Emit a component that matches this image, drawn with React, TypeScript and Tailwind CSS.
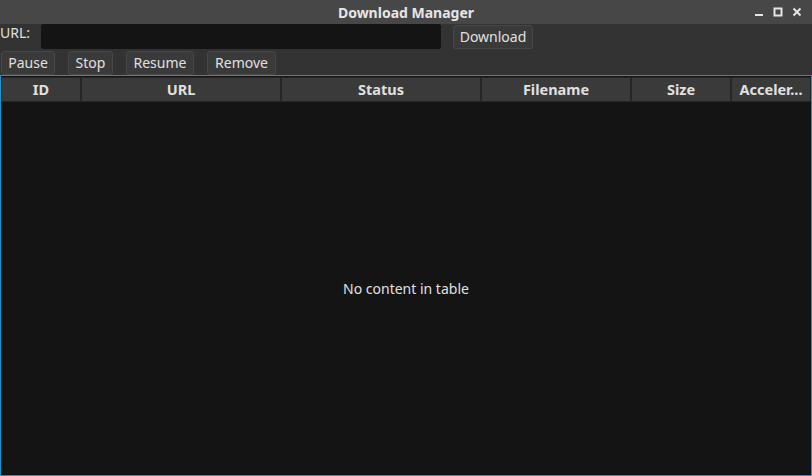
import React from "react";

const columns = [
  { label: "ID", w: "w-[80px]" },
  { label: "URL", w: "w-[200px]" },
  { label: "Status", w: "w-[200px]" },
  { label: "Filename", w: "w-[150px]" },
  { label: "Size", w: "w-[100px]" },
  { label: "Acceler...", w: "flex-1" },
];

function Btn({ children, className = "" }: { children: React.ReactNode; className?: string }) {
  return (
    <button
      className={`h-[24px] rounded-[3px] border border-[#474747] bg-[#3a3a3a] text-[14px] leading-none text-[#e0e0e0] ${className}`}
    >
      {children}
    </button>
  );
}

export default function App() {
  return (
    <div
      className="flex h-[476px] w-[812px] flex-col bg-[#333333] text-[#e0e0e0]"
      style={{ fontFamily: '"Noto Sans", "DejaVu Sans", sans-serif' }}
    >
      {/* Title bar */}
      <div className="relative flex h-[24px] shrink-0 items-center justify-center bg-[#474747]">
        <span className="text-[14px] font-bold text-[#e6e6e6]">Download Manager</span>
        <div className="absolute right-[10px] top-0 flex h-full items-center gap-[9px]">
          <svg width="10" height="10" viewBox="0 0 10 10">
            <rect x="1" y="7" width="8" height="2" fill="#e6e6e6" />
          </svg>
          <svg width="10" height="10" viewBox="0 0 10 10">
            <rect x="1.5" y="1.5" width="7" height="7" fill="none" stroke="#e6e6e6" strokeWidth="2" />
          </svg>
          <svg width="10" height="10" viewBox="0 0 10 10">
            <path d="M1.5 1.5 L8.5 8.5 M8.5 1.5 L1.5 8.5" stroke="#e6e6e6" strokeWidth="2" />
          </svg>
        </div>
      </div>

      {/* URL row */}
      <div className="flex h-[26px] shrink-0 items-start">
        <span className="mt-[1px] w-[41px] text-[14px] leading-[16px]">URL:</span>
        <div className="h-[25px] w-[400px] rounded-[3px] bg-[#141414]" />
        <Btn className="ml-[12px] mt-[1px] w-[80px]">Download</Btn>
      </div>

      {/* Action buttons */}
      <div className="flex h-[25px] shrink-0 items-start gap-[13px] pl-[1px] pt-[1px]">
        <Btn className="w-[54px]">Pause</Btn>
        <Btn className="w-[45px]">Stop</Btn>
        <Btn className="w-[68px]">Resume</Btn>
        <Btn className="w-[69px]">Remove</Btn>
      </div>

      {/* Table */}
      <div className="flex min-h-0 flex-1 flex-col border border-[#0b9ad4] bg-[#141414]">
        <div className="flex h-[26px] shrink-0 pt-[1px]">
          {columns.map((c) => (
            <div
              key={c.label}
              className={`${c.w} flex items-center justify-center border border-[#262626] bg-[#3a3a3a] text-[14.5px] font-bold text-[#e0e0e0]`}
            >
              {c.label}
            </div>
          ))}
        </div>
        <div className="flex flex-1 items-center justify-center text-[14px] text-[#e0e0e0]">
          No content in table
        </div>
      </div>
    </div>
  );
}
